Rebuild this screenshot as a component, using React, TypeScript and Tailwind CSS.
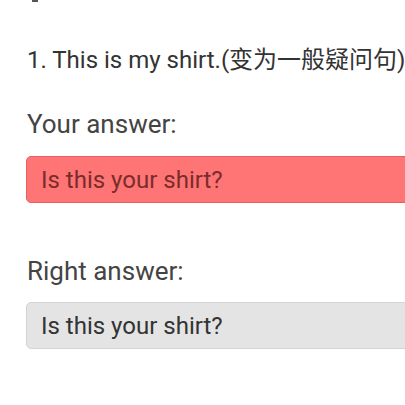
export default function App() {
  return (
    <div className="w-[405px] h-[405px] overflow-hidden bg-white font-['Roboto','Noto_Sans_CJK_SC',sans-serif]">
      <div className="ml-[32px] w-[6px] h-[2px] bg-[#555]"></div>
      <div className="pl-[27px] pt-[41px] text-[24px] leading-[34px] text-[#333] whitespace-nowrap">
        1. This is my shirt.(变为一般疑问句)
      </div>
      <div className="pl-[27px] mt-[30px] text-[26px] leading-[34px] text-[#444]">Your answer:</div>
      <div className="ml-[26px] mt-[15px] w-[400px] h-[47px] rounded-[5px] border border-[#e06262] bg-[#ff7575] pl-[14px] flex items-center text-[24px] text-[#7a2c2c]">
        Is this your shirt?
      </div>
      <div className="pl-[27px] mt-[51px] text-[26px] leading-[34px] text-[#444]">Right answer:</div>
      <div className="ml-[26px] mt-[14px] w-[400px] h-[47px] rounded-[5px] border border-[#d4d4d4] bg-[#e4e4e4] pl-[14px] flex items-center text-[24px] text-[#333]">
        Is this your shirt?
      </div>
    </div>
  );
}
